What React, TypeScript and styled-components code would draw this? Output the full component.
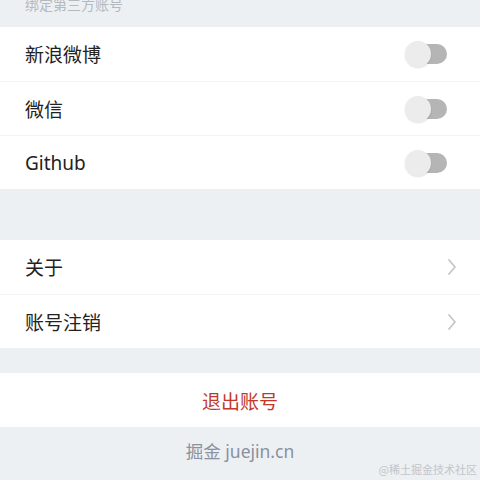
import React, { useState } from "react";
import styled, { createGlobalStyle } from "styled-components";

const GlobalStyle = createGlobalStyle`
  html, body {
    margin: 0;
    padding: 0;
    background: #edf0f3;
  }
  body {
    font-family: "Noto Sans", "Noto Sans CJK SC", sans-serif;
  }
`;

const Page = styled.div`
  width: 480px;
  height: 480px;
  overflow: hidden;
  background: #edf0f3;
  display: flex;
  flex-direction: column;
`;

const SectionTitle = styled.div`
  height: 27px;
  padding: 0 25px;
  overflow: hidden;
  font-family: "Noto Sans CJK SC", sans-serif;
  font-size: 14px;
  line-height: 14px;
  color: #b4b9c0;

  span {
    display: block;
    margin-top: -3px;
  }
`;

const Group = styled.div`
  background: #fff;
  display: flex;
  flex-direction: column;
`;

const Spacer = styled.div<{ $h: number }>`
  height: ${({ $h }) => $h}px;
  flex-shrink: 0;
`;

const Row = styled.div`
  height: 54px;
  padding: 0 33px 0 25px;
  display: flex;
  align-items: center;
  justify-content: space-between;
  box-sizing: border-box;

  & + & {
    border-top: 1px solid #f3f4f5;
  }
`;

const Label = styled.span`
  font-family: "Noto Sans", "Noto Sans CJK SC", sans-serif;
  font-size: 19px;
  color: #222;
`;

const Track = styled.button<{ $on: boolean }>`
  position: relative;
  width: 40px;
  height: 20px;
  padding: 0;
  border: none;
  border-radius: 10px;
  background: ${({ $on }) => ($on ? "#1e80ff" : "#b5b5b5")};
  cursor: pointer;
`;

const Thumb = styled.span<{ $on: boolean }>`
  position: absolute;
  top: -3px;
  left: ${({ $on }) => ($on ? "16px" : "-2px")};
  width: 26px;
  height: 26px;
  border-radius: 50%;
  background: #ececec;
  box-shadow: 0 1px 2px rgba(0, 0, 0, 0.12);
`;

const Chevron = styled.svg`
  width: 10px;
  height: 18px;
  margin-right: -10px;
`;

const LogoutRow = styled.div`
  height: 54px;
  background: #fff;
  display: flex;
  align-items: center;
  justify-content: center;
  font-family: "Noto Sans CJK SC", sans-serif;
  font-size: 19px;
  color: #c0392b;
`;

const Footer = styled.div`
  flex: 1;
  display: flex;
  flex-direction: column;
  align-items: center;
  padding-top: 11px;
`;

const Brand = styled.div`
  font-family: "Noto Sans", "Noto Sans CJK SC", sans-serif;
  font-size: 17.5px;
  color: #8a919f;
`;

const Watermark = styled.div`
  align-self: flex-end;
  margin-right: 3px;
  margin-top: -2px;
  font-family: "Noto Sans CJK SC", serif;
  font-size: 11px;
  color: #c2c5cb;
`;

const Toggle = () => {
  const [on, setOn] = useState(false);
  return (
    <Track $on={on} onClick={() => setOn(!on)}>
      <Thumb $on={on} />
    </Track>
  );
};

const Arrow = () => (
  <Chevron viewBox="0 0 10 18">
    <path d="M2 2l6 7-6 7" fill="none" stroke="#c4c6c9" strokeWidth="1.8" strokeLinecap="round" strokeLinejoin="round" />
  </Chevron>
);

export default function App() {
  return (
    <Page>
      <GlobalStyle />
      <SectionTitle>
        <span>绑定第三方账号</span>
      </SectionTitle>
      <Group>
        {["新浪微博", "微信", "Github"].map((name) => (
          <Row key={name}>
            <Label>{name}</Label>
            <Toggle />
          </Row>
        ))}
      </Group>
      <Spacer $h={51} />
      <Group>
        {["关于", "账号注销"].map((name) => (
          <Row key={name}>
            <Label>{name}</Label>
            <Arrow />
          </Row>
        ))}
      </Group>
      <Spacer $h={25} />
      <LogoutRow>退出账号</LogoutRow>
      <Footer>
        <Brand>掘金 juejin.cn</Brand>
        <Watermark>@稀土掘金技术社区</Watermark>
      </Footer>
    </Page>
  );
}
